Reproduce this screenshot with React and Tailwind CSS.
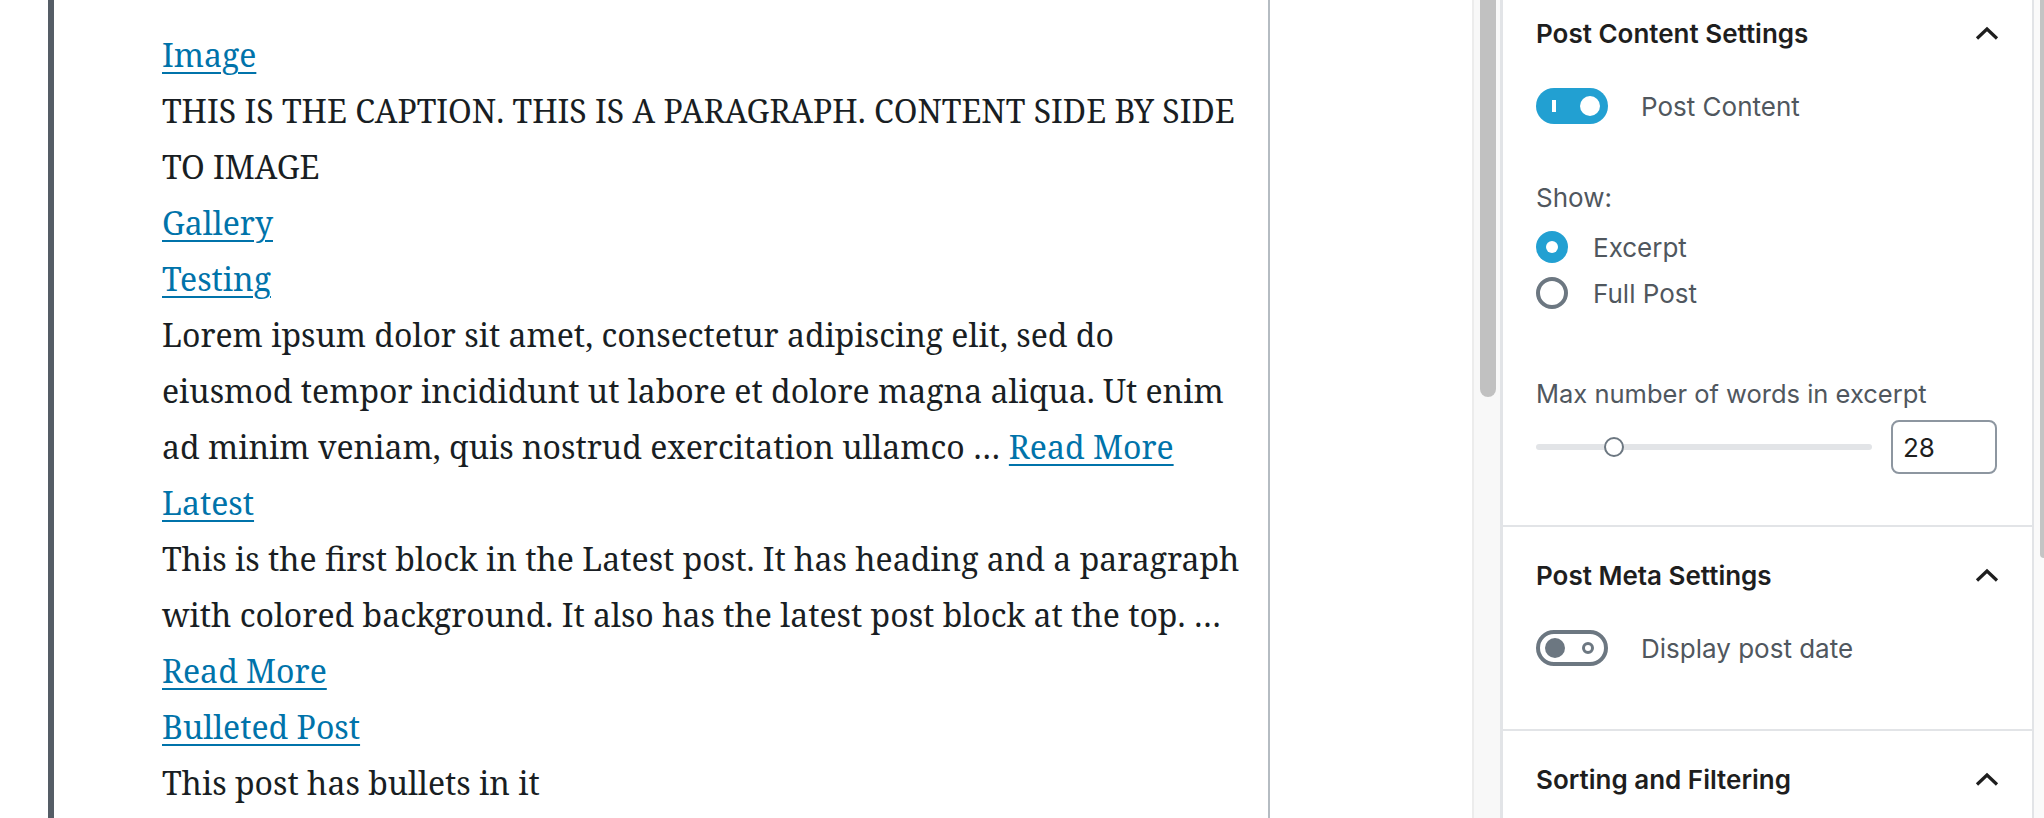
import { useState } from 'react';

const posts = [
  { title: 'Image', excerpt: 'THIS IS THE CAPTION. THIS IS A PARAGRAPH. CONTENT SIDE BY SIDE TO IMAGE' },
  { title: 'Gallery' },
  {
    title: 'Testing',
    excerpt:
      'Lorem ipsum dolor sit amet, consectetur adipiscing elit, sed do eiusmod tempor incididunt ut labore et dolore magna aliqua. Ut enim ad minim veniam, quis nostrud exercitation ullamco …',
    more: true,
  },
  {
    title: 'Latest',
    excerpt:
      'This is the first block in the Latest post. It has heading and a paragraph with colored background. It also has the latest post block at the top. …',
    more: true,
  },
  { title: 'Bulleted Post', excerpt: 'This post has bullets in it' },
];

function Chevron() {
  return (
    <svg width="24" height="14" viewBox="0 0 24 14" fill="none" stroke="#1e1e1e" strokeWidth="3.2">
      <polyline points="2,12.5 12,3 22,12.5" />
    </svg>
  );
}

function PanelHeading({ title }) {
  return (
    <div className="h-[96px] flex items-center justify-between">
      <span className="text-[26px] font-semibold text-[#1e1e1e]">{title}</span>
      <Chevron />
    </div>
  );
}

function Toggle({ on, label }) {
  return (
    <div className="flex items-center h-[36px] gap-[33px]">
      {on ? (
        <div className="relative w-[72px] h-[36px] rounded-full bg-[#22a0d2]">
          <span className="absolute left-[16px] top-[12px] w-[4px] h-[12px] bg-white" />
          <span className="absolute left-[44px] top-[8px] w-[20px] h-[20px] rounded-full bg-white" />
        </div>
      ) : (
        <div className="relative w-[72px] h-[36px] rounded-full border-4 border-[#6c7781] bg-white">
          <span className="absolute left-[5px] top-[4px] w-[20px] h-[20px] rounded-full bg-[#6c7781]" />
          <span className="absolute left-[42px] top-[8px] w-[12px] h-[12px] rounded-full border-[3px] border-[#6c7781]" />
        </div>
      )}
      <span className="text-[26px] text-[#50575e]">{label}</span>
    </div>
  );
}

function Radio({ checked, label, onClick }) {
  return (
    <div className="flex items-center h-[46px] gap-[25px] cursor-pointer" onClick={onClick}>
      {checked ? (
        <span className="w-[32px] h-[32px] rounded-full bg-[#22a0d2] flex items-center justify-center">
          <span className="w-[12px] h-[12px] rounded-full bg-white" />
        </span>
      ) : (
        <span className="w-[32px] h-[32px] rounded-full border-4 border-[#6c7781] bg-white" />
      )}
      <span className="text-[26px] text-[#50575e]">{label}</span>
    </div>
  );
}

export default function App() {
  const [show, setShow] = useState('excerpt');

  return (
    <div className="w-[2044px] h-[818px] flex overflow-hidden bg-white">
      {/* editor canvas */}
      <div className="w-[48px] shrink-0" />
      <div className="w-[6px] shrink-0 bg-[#555d66]" />
      <div className="w-[1216px] shrink-0 border-r-2 border-[#b5bcc2] pl-[108px] pt-[27px]">
        <div
          className="w-[1084px] text-[32px] leading-[56px] text-[#191e23]"
          style={{ fontFamily: '"Noto Serif", "DejaVu Serif", serif' }}
        >
          {posts.map((p) => (
            <div key={p.title}>
              <div>
                <a href="#" className="text-[#0073aa] underline decoration-2 underline-offset-[5px]">
                  {p.title}
                </a>
              </div>
              {p.excerpt && (
                <div>
                  {p.excerpt}
                  {p.more && (
                    <>
                      {' '}
                      <a href="#" className="text-[#0073aa] underline decoration-2 underline-offset-[5px]">
                        Read More
                      </a>
                    </>
                  )}
                </div>
              )}
            </div>
          ))}
        </div>
      </div>
      <div className="w-[202px] shrink-0" />

      {/* canvas scrollbar */}
      <div className="w-[31px] shrink-0 bg-[#f8f8f8] border-l-2 border-l-[#ececec] border-r-[3px] border-r-[#e2e4e7] pl-[6px]">
        <div className="w-[16px] h-[397px] rounded-b-full bg-[#c1c1c1]" />
      </div>

      {/* settings sidebar */}
      <div
        className="w-[531px] shrink-0 border-r-2 border-[#e2e4e7]"
        style={{ fontFamily: 'Inter, "Noto Sans", sans-serif' }}
      >
        <div className="-mt-[15px]">
          <div className="px-[33px] pb-[51px] border-b-2 border-[#e2e4e7]">
            <PanelHeading title="Post Content Settings" />
            <div className="pt-[7px]">
              <Toggle on label="Post Content" />
            </div>
            <div className="mt-[54px] text-[26px] leading-[40px] text-[#50575e]">Show:</div>
            <div className="mt-[6px]">
              <Radio label="Excerpt" checked={show === 'excerpt'} onClick={() => setShow('excerpt')} />
              <Radio label="Full Post" checked={show === 'full'} onClick={() => setShow('full')} />
            </div>
            <div className="mt-[60px] text-[25.5px] leading-[36px] text-[#50575e]">Max number of words in excerpt</div>
            <div className="mt-[8px] flex items-center gap-[19px]">
              <div className="relative w-[336px] h-[6px] rounded-full bg-[#e2e4e7]">
                <span className="absolute left-[68px] -top-[7px] w-[20px] h-[20px] rounded-full border-2 border-[#6c7781] bg-white" />
              </div>
              <div className="w-[106px] h-[54px] rounded-[8px] border-2 border-[#8d96a0] px-[10px] flex items-center text-[26px] text-[#1e1e1e]">
                28
              </div>
            </div>
          </div>

          <div className="px-[33px] pb-[63px] border-b-2 border-[#e2e4e7]">
            <PanelHeading title="Post Meta Settings" />
            <div className="pt-[7px]">
              <Toggle label="Display post date" />
            </div>
          </div>

          <div className="px-[33px]">
            <PanelHeading title="Sorting and Filtering" />
          </div>
        </div>
      </div>

      {/* sidebar scrollbar */}
      <div className="w-[10px] shrink-0 bg-[#fafafa] pl-[6px]">
        <div className="w-[4px] h-[558px] rounded-bl-full bg-[#c4c4c4]" />
      </div>
    </div>
  );
}
